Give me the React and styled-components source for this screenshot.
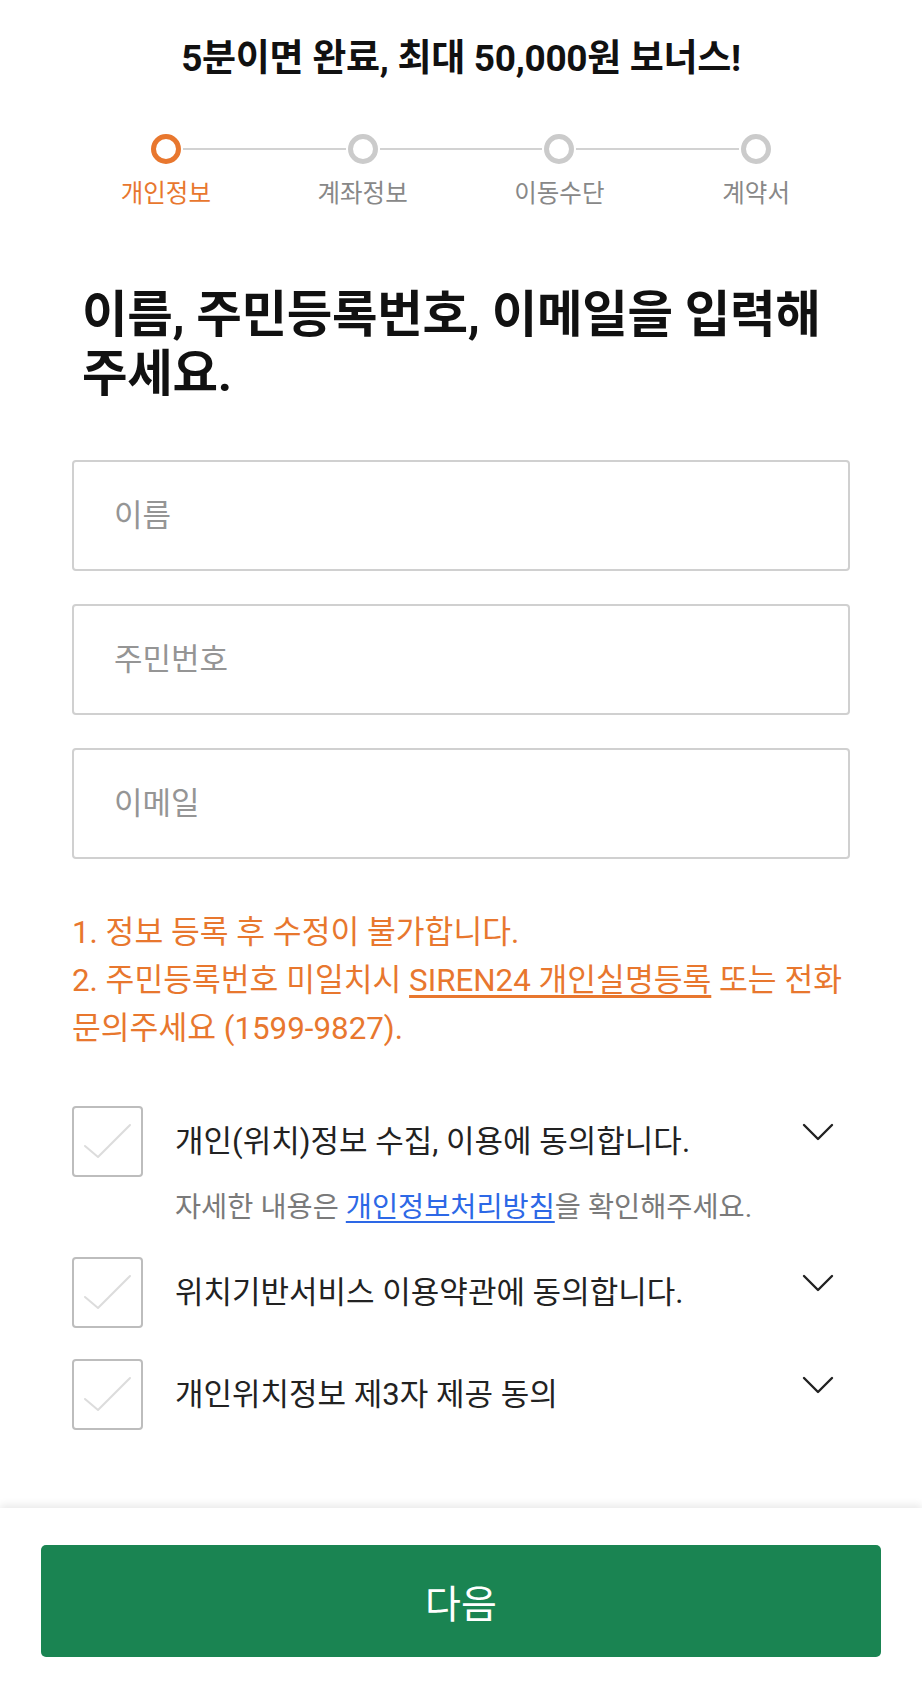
import React from 'react';
import styled, { createGlobalStyle } from 'styled-components';

const GlobalStyle = createGlobalStyle`
    html, body {
        margin: 0;
        padding: 0;
        background: #fff;
    }
    body {
        font-family: Roboto, "Noto Sans CJK KR", sans-serif;
        color: #111;
        word-break: keep-all;
    }
    * {
        box-sizing: border-box;
    }
`;

const ORANGE = '#e8772e';

const steps = ['개인정보', '계좌정보', '이동수단', '계약서'];

const agreements = [
    { label: '개인(위치)정보 수집, 이용에 동의합니다.', detail: true },
    { label: '위치기반서비스 이용약관에 동의합니다.' },
    { label: '개인위치정보 제3자 제공 동의' },
];

function CheckMark() {
    return (
        <svg width="71" height="71" viewBox="0 0 71 71" fill="none">
            <polyline points="13,40 26,51 58,19" stroke="#dcdcdc" strokeWidth="2" strokeLinecap="round" strokeLinejoin="round" />
        </svg>
    );
}

function Chevron() {
    return (
        <svg width="32" height="18" viewBox="0 0 32 18" fill="none">
            <polyline points="2,2 16,16 30,2" stroke="#222" strokeWidth="2.4" strokeLinecap="round" strokeLinejoin="round" />
        </svg>
    );
}

export default function App() {
    return (
        <Page>
            <GlobalStyle />
            <Content>
                <Title>5분이면 완료, 최대 50,000원 보너스!</Title>
                <Steps>
                    {steps.map((step, i) => (
                        <Step key={step}>
                            <Track>
                                <Line $hidden={i === 0} />
                                <Dot $active={i === 0} />
                                <Line $hidden={i === steps.length - 1} />
                            </Track>
                            <StepLabel $active={i === 0}>{step}</StepLabel>
                        </Step>
                    ))}
                </Steps>

                <Form>
                    <Heading>이름, 주민등록번호, 이메일을 입력해 주세요.</Heading>
                    <Fields>
                        <Input placeholder="이름" />
                        <Input placeholder="주민번호" />
                        <Input placeholder="이메일" />
                    </Fields>

                    <Notice>
                        <li>1. 정보 등록 후 수정이 불가합니다.</li>
                        <li>2. 주민등록번호 미일치시 <NoticeLink href="#">SIREN24 개인실명등록</NoticeLink> 또는 전화 문의주세요 (1599-9827).</li>
                    </Notice>

                    <Agreements>
                        {agreements.map((item) => (
                            <Agreement key={item.label}>
                                <AgreeRow>
                                    <CheckBox type="button" aria-label={item.label}>
                                        <CheckMark />
                                    </CheckBox>
                                    <AgreeLabel>{item.label}</AgreeLabel>
                                    <ExpandButton type="button" aria-label="펼치기">
                                        <Chevron />
                                    </ExpandButton>
                                </AgreeRow>
                                {item.detail && (
                                    <AgreeDetail>
                                        자세한 내용은 <DetailLink href="#">개인정보처리방침</DetailLink>을 확인해주세요.
                                    </AgreeDetail>
                                )}
                            </Agreement>
                        ))}
                    </Agreements>
                </Form>
            </Content>

            <Footer>
                <NextButton type="button">다음</NextButton>
            </Footer>
        </Page>
    );
}

const Page = styled.div`
    min-height: 100vh;
    display: flex;
    flex-direction: column;
`;

const Content = styled.main`
    display: flex;
    flex-direction: column;
    padding-top: 39px;
`;

const Title = styled.h1`
    margin: 0;
    text-align: center;
    font-size: 37px;
    line-height: 40px;
    font-weight: 700;
    color: #111;
    letter-spacing: -0.3px;
`;

const Steps = styled.ol`
    list-style: none;
    margin: 55px auto 0;
    padding: 0;
    width: 787px;
    display: grid;
    grid-template-columns: repeat(4, 1fr);
`;

const Step = styled.li`
    display: flex;
    flex-direction: column;
    align-items: center;
    gap: 15px;
`;

const Track = styled.div`
    width: 100%;
    display: flex;
    align-items: center;
    gap: 2px;
`;

const Line = styled.span`
    flex: 1;
    height: 2px;
    background: ${({ $hidden }) => ($hidden ? 'transparent' : '#d2d2d2')};
`;

const Dot = styled.span`
    width: 30px;
    height: 30px;
    border-radius: 50%;
    border: 5px solid ${({ $active }) => ($active ? ORANGE : '#cbcbcb')};
    background: #fff;
    flex-shrink: 0;
`;

const StepLabel = styled.span`
    font-size: 24.5px;
    line-height: 30px;
    color: ${({ $active }) => ($active ? ORANGE : '#888')};
`;

const Form = styled.section`
    padding: 0 72px;
    display: flex;
    flex-direction: column;
`;

const Heading = styled.h2`
    margin: 77px 0 0;
    padding: 0 8px 0 10px;
    font-size: 49.5px;
    line-height: 59px;
    font-weight: 700;
    color: #111;
    letter-spacing: -0.3px;
`;

const Fields = styled.div`
    margin-top: 56px;
    display: flex;
    flex-direction: column;
    gap: 33px;
`;

const Input = styled.input`
    height: 111px;
    width: 100%;
    border: 2px solid #d0d0d0;
    border-radius: 4px;
    padding: 0 40px;
    font-family: inherit;
    font-size: 31px;
    color: #222;
    outline: none;
    &::placeholder {
        color: #959595;
    }
`;

const Notice = styled.ul`
    list-style: none;
    margin: 50px 0 0;
    padding: 0;
    font-size: 31.3px;
    line-height: 48px;
    color: ${ORANGE};
`;

const NoticeLink = styled.a`
    color: ${ORANGE};
    text-decoration: underline;
    text-underline-offset: 4px;
`;

const Agreements = styled.div`
    margin-top: 53px;
    display: flex;
    flex-direction: column;
    gap: 31px;
`;

const Agreement = styled.div`
    display: flex;
    flex-direction: column;
`;

const AgreeRow = styled.div`
    display: flex;
    align-items: center;
    gap: 32px;
`;

const CheckBox = styled.button`
    width: 71px;
    height: 71px;
    flex-shrink: 0;
    padding: 0;
    border: 2px solid #bdbdbd;
    border-radius: 4px;
    background: #fff;
    display: flex;
    align-items: center;
    justify-content: center;
    svg {
        margin: -2px;
    }
`;

const AgreeLabel = styled.span`
    flex: 1;
    font-size: 31px;
    line-height: 40px;
    color: #222;
`;

const ExpandButton = styled.button`
    align-self: flex-start;
    margin-top: 17px;
    margin-right: 16px;
    padding: 0;
    border: 0;
    background: none;
    display: flex;
`;

const AgreeDetail = styled.p`
    margin: 13px 0 0 103px;
    font-size: 28.4px;
    line-height: 36px;
    color: #7a7a7a;
`;

const DetailLink = styled.a`
    color: #2d68e6;
    text-decoration: underline;
    text-underline-offset: 4px;
`;

const Footer = styled.footer`
    margin-top: auto;
    padding: 37px 41px 26px;
    background: #fff;
    box-shadow: 0 -3px 8px rgba(0, 0, 0, 0.09);
`;

const NextButton = styled.button`
    width: 100%;
    height: 112px;
    border: 0;
    border-radius: 5px;
    background: #1a8452;
    color: #fff;
    font-family: inherit;
    font-size: 39px;
`;
